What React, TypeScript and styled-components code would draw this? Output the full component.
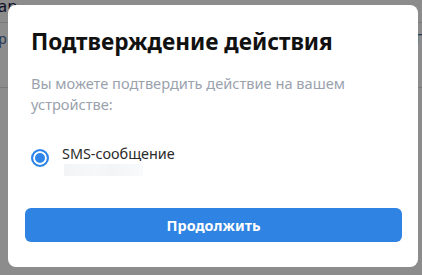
import styled, { createGlobalStyle } from "styled-components";
import { useState } from "react";

const GlobalStyle = createGlobalStyle`
    * { box-sizing: border-box; }
    html, body {
        margin: 0;
        padding: 0;
        width: 422px;
        height: 275px;
        overflow: hidden;
        font-family: 'Noto Sans', 'Open Sans', sans-serif;
    }
`

const methods = [
    { id: 'sms', title: 'SMS-сообщение' },
];

function App() {
    const [selected, setSelected] = useState('sms');

    return (
        <>
            <GlobalStyle />
            <Page>
                <PageHeader>
                    <PageTitle>Тар</PageTitle>
                </PageHeader>
                <PageRow>
                    <PageLink>Пр</PageLink>
                    <PageLink>Пр</PageLink>
                </PageRow>
            </Page>
            <Overlay>
                <Modal>
                    <Title>Подтверждение действия</Title>
                    <Subtitle>Вы можете подтвердить действие на вашем{'\n'}устройстве:</Subtitle>
                    <MethodsList>
                        {methods.map((elem) => (
                            <MethodItem key={elem.id} onClick={() => setSelected(elem.id)}>
                                <Radio checked={selected === elem.id} />
                                <MethodText>
                                    <MethodTitle>{elem.title}</MethodTitle>
                                    <MethodPlaceholder />
                                </MethodText>
                            </MethodItem>
                        ))}
                    </MethodsList>
                    <ContinueButton>Продолжить</ContinueButton>
                </Modal>
            </Overlay>
        </>
    )
}

const Page = styled.div`
    width: 422px;
    height: 275px;
    background: #ffffff;
    overflow: hidden;
`
const PageHeader = styled.div`
    height: 23px;
    border-bottom: 1px solid #dcdcdc;
    display: flex;
    align-items: flex-start;
`
const PageTitle = styled.div`
    font-size: 17px;
    line-height: 20px;
    color: #1c1f4d;
    margin-left: -11px;
    margin-top: -4px;
`
const PageRow = styled.div`
    height: 65px;
    border-bottom: 1px solid #dcdcdc;
    display: flex;
    justify-content: space-between;
    align-items: flex-start;
    padding-top: 6px;
`
const PageLink = styled.div`
    font-size: 14px;
    color: #4a6a9a;
    margin: 0 -12px;
`
const Overlay = styled.div`
    position: fixed;
    inset: 0;
    background: rgba(0, 0, 0, 0.45);
    display: flex;
    justify-content: flex-start;
    align-items: flex-start;
    padding: 5px 0 0 8px;
`
const Modal = styled.div`
    width: 410px;
    height: 262px;
    background: #ffffff;
    border-radius: 8px;
    padding: 22px 16px 0 17px;
    display: flex;
    flex-direction: column;
    white-space: pre-wrap;
`
const Title = styled.h2`
    margin: 0 0 0 6px;
    font-size: 22.6px;
    font-weight: 700;
    line-height: 30px;
    color: #111111;
`
const Subtitle = styled.p`
    margin: 16px 0 0 6px;
    font-size: 14.6px;
    line-height: 21px;
    color: #9aa2ad;
`
const MethodsList = styled.div`
    margin-top: 29px;
    margin-left: 6px;
    display: flex;
    flex-direction: column;
`
const MethodItem = styled.div`
    display: flex;
    align-items: flex-start;
    gap: 13px;
    cursor: pointer;
`
interface IRadio {
    checked: boolean;
}
const Radio = styled.span<IRadio>`
    width: 18px;
    height: 18px;
    margin-top: 5px;
    border-radius: 50%;
    border: 2px solid ${props => props.checked ? '#2f86e8' : '#c5ccd6'};
    background: ${props => props.checked ? '#2f86e8' : '#fff'};
    box-shadow: inset 0 0 0 2px #ffffff;
    flex-shrink: 0;
`
const MethodText = styled.div`
    display: flex;
    flex-direction: column;
`
const MethodTitle = styled.div`
    font-size: 14.4px;
    line-height: 20px;
    color: #2a2a2a;
`
const MethodPlaceholder = styled.div`
    width: 79px;
    height: 12px;
    margin-top: 0px;
    margin-left: 2px;
    background: linear-gradient(90deg, #f3f4f6, #f7f8f9 40%, #f3f4f6 60%, #f9fafb);
`
const ContinueButton = styled.button`
    margin-top: 32px;
    width: 377px;
    height: 34px;
    border: none;
    border-radius: 6px;
    background: #2f83e2;
    color: #ffffff;
    font-family: 'Noto Sans', 'Open Sans', sans-serif;
    font-size: 14.4px;
    font-weight: 700;
    cursor: pointer;
`

export default App;
